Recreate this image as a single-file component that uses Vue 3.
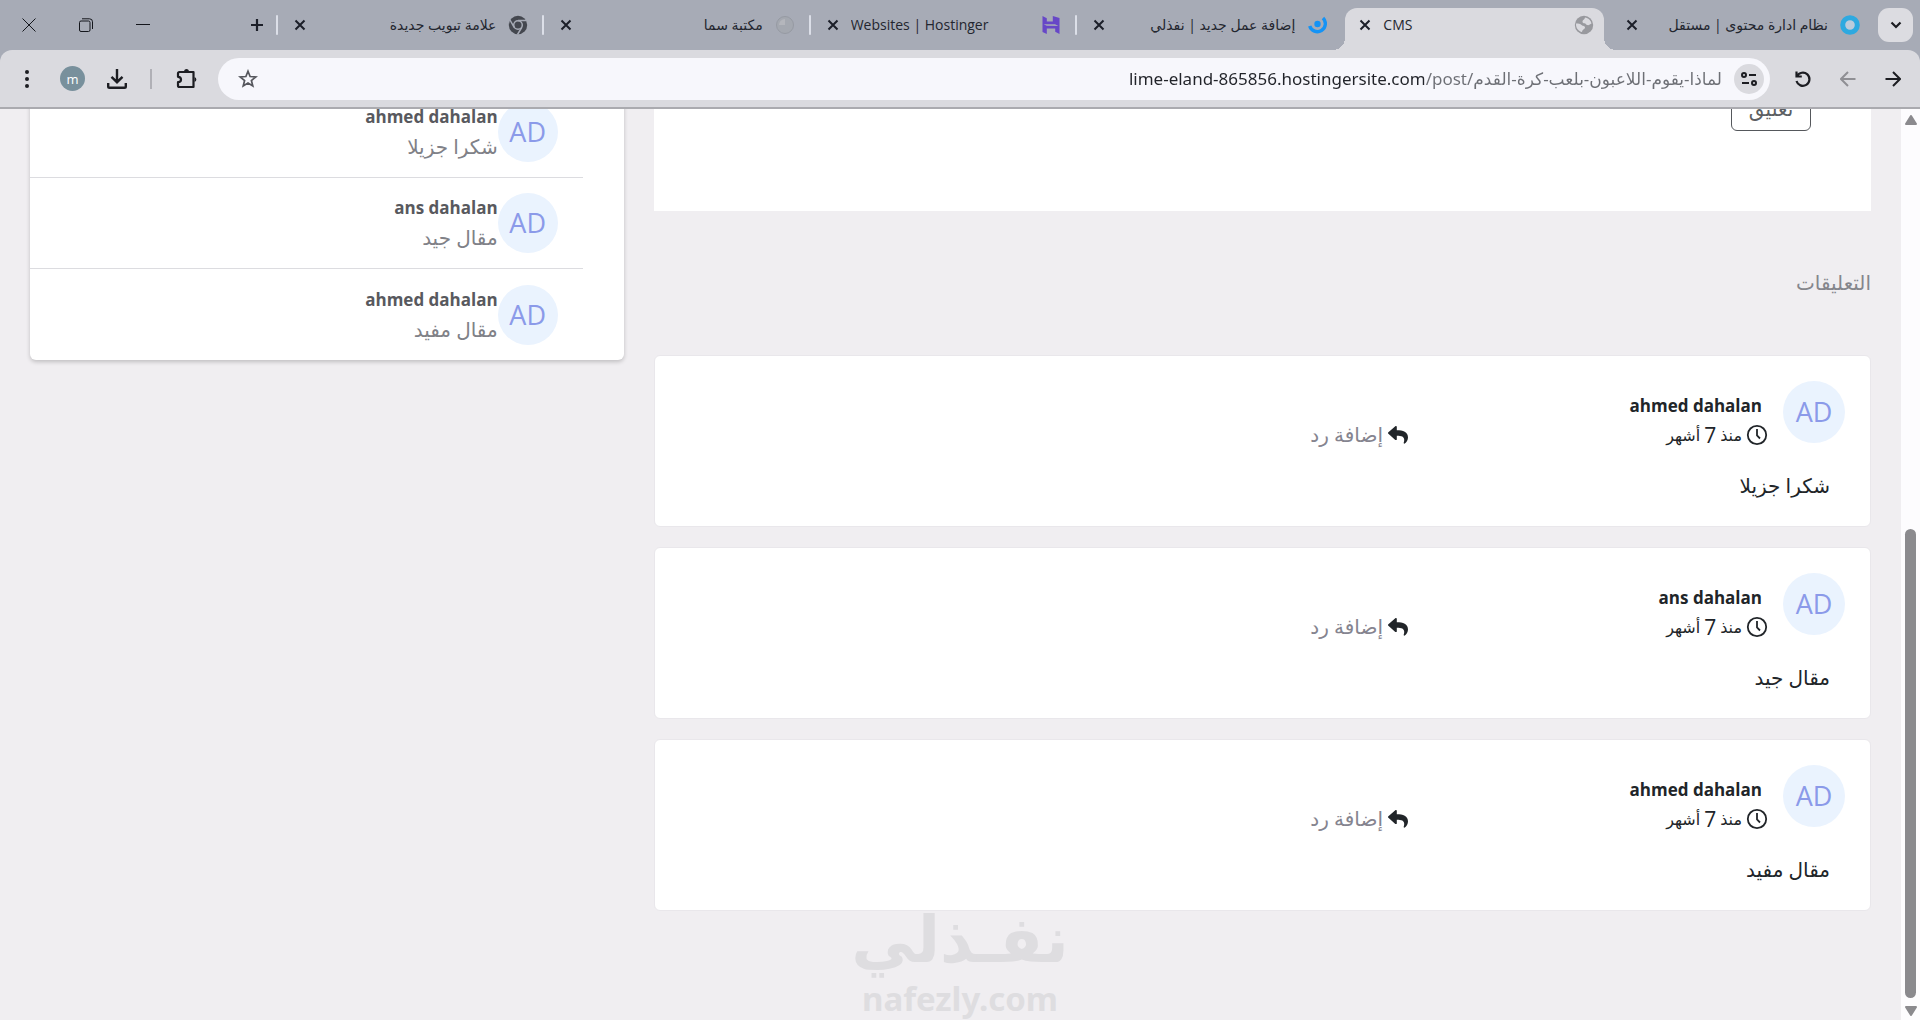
<template>
  <div class="browser" dir="rtl">
    <header class="tab-strip">
      <button class="tab-search" type="button" aria-label="البحث في علامات التبويب">
        <svg width="12" height="8" viewBox="0 0 12 8"><path d="M1.500 1.500 6 6l4.500-4.500" fill="none" stroke="#1c1d22" stroke-width="2.200" /></svg>
      </button>

      <nav class="tabs">
        <div v-for="t in tabs" :key="t.id" class="tab" :class="{ active: t.active, divided: t.divided }">
          <svg v-if="t.icon === 'ring'" class="favicon" viewBox="0 0 20 20">
            <circle cx="10" cy="10" r="7.300" fill="#bccbdb" stroke="#2ea9e0" stroke-width="5" />
          </svg>
          <svg v-else-if="t.icon === 'globe'" class="favicon" viewBox="0 0 20 20">
            <circle cx="10" cy="10" r="9.200" fill="#98999e" />
            <path d="M2 8.500c2.500 0 4.500.2 5.500 1.500 1 1.200 3.500.6 3.500 2.500s-2.500 1.500-3 4.500c-3.300-.7-6.300-3.500-6-8.500zM8.500 6.500C8.800 4.500 10.500 5 11 2.500c3.300.5 6 3 6.500 6-1.500 1-2.500 2-4.500 1.500-1.500-.4-1-1.500-2.500-1.700-1.200-.1-2.200-.5-2-1.800z" fill="#dadadf" />
          </svg>
          <svg v-else-if="t.icon === 'nafezly'" class="favicon" viewBox="0 0 20 20">
            <circle cx="10.500" cy="9" r="3.200" fill="#1593f5" />
            <path d="M16 3a8 8 0 1 1-13.300 8" fill="none" stroke="#1593f5" stroke-width="3.400" />
          </svg>
          <svg v-else-if="t.icon === 'hostinger'" class="favicon" viewBox="0 0 20 20">
            <path d="M1.500 9V1l4.300 2.300v3.200l6 .1V1L18.500 3v8.500L14 9.200zM18.500 11v8l-4.300-2.200v-3.300l-8.400-.1V19L1.500 17V8.800l4.300 2z" fill="#6747c7" />
          </svg>
          <svg v-else-if="t.icon === 'blank'" class="favicon" viewBox="0 0 20 20">
            <circle cx="10" cy="10" r="8.500" fill="#a4a8b0" stroke="#969aa3" />
            <path d="M10 4v6H4a6 6 0 0 1 6-6z" fill="#b4b6bc" />
          </svg>
          <svg v-else class="favicon" viewBox="0 0 20 20">
            <circle cx="10" cy="10" r="9.200" fill="#44474f" />
            <circle cx="10" cy="10" r="4.300" fill="#44474f" stroke="#a7abb6" stroke-width="1.500" />
            <path d="M10 5.500h8.500M6.200 12.300 2 5M13.800 12.300 9.500 19.500" stroke="#a7abb6" stroke-width="1.500" />
          </svg>
          <a href="#" class="tab-title" :class="{ latin: t.latin }" @click.prevent>{{ t.title }}</a>
          <button class="tab-close" type="button" aria-label="إغلاق">
            <svg width="12" height="12" viewBox="0 0 12 12"><path d="m1.500 1.500 9 9m0-9-9 9" stroke="#1c1f29" stroke-width="2" /></svg>
          </button>
        </div>
      </nav>

      <button class="new-tab" type="button" aria-label="علامة تبويب جديدة">
        <svg width="14" height="14" viewBox="0 0 14 14"><path d="M7 1v12M1 7h12" stroke="#1c1f29" stroke-width="2.200" /></svg>
      </button>

      <div class="window-buttons">
        <button type="button" aria-label="تصغير">
          <svg width="14" height="14" viewBox="0 0 14 14"><path d="M0 6.500h14" stroke="#14161c" /></svg>
        </button>
        <button type="button" aria-label="استعادة">
          <svg width="14" height="14" viewBox="0 0 14 14" fill="none" stroke="#14161c">
            <rect x=".5" y="3" width="10.500" height="10.500" rx="1.500" />
            <path d="M3 .8h7.500a3 3 0 0 1 3 3V11" />
          </svg>
        </button>
        <button type="button" aria-label="إغلاق النافذة">
          <svg width="14" height="14" viewBox="0 0 14 14"><path d="m.5.500 13 13m0-13-13 13" stroke="#14161c" /></svg>
        </button>
      </div>
    </header>

    <div class="toolbar">
      <button class="nav-button" type="button" aria-label="التقدم">
        <svg width="16" height="16" viewBox="0 0 16 16" fill="none" stroke="#1c1d22" stroke-width="2"><path d="M.5 8h14M8 1l7 7-7 7" /></svg>
      </button>
      <button class="nav-button" type="button" aria-label="رجوع" disabled>
        <svg width="16" height="16" viewBox="0 0 16 16" fill="none" stroke="#8f8f94" stroke-width="2"><path d="M15.500 8h-14M8 1 1 8l7 7" /></svg>
      </button>
      <button class="nav-button" type="button" aria-label="إعادة تحميل">
        <svg width="18" height="18" viewBox="0 0 18 18" fill="none" stroke="#1c1d22" stroke-width="2.200"><path d="M2.500 1.500v5h5.300M3 6.200A6.600 6.600 0 1 1 2.500 11" /></svg>
      </button>

      <div class="address">
        <button class="site-info" type="button" aria-label="معلومات الموقع">
          <svg width="16" height="14" viewBox="0 0 16 14" fill="none" stroke="#1c1d22" stroke-width="2">
            <circle cx="3" cy="3" r="2" /><path d="M8 3h7M1 11h7" /><circle cx="13" cy="11" r="2" />
          </svg>
        </button>
        <input v-model="url" class="url" type="text" dir="ltr" aria-label="شريط العناوين" spellcheck="false" />
        <button class="star" type="button" aria-label="إضافة إشارة">
          <svg width="20" height="20" viewBox="0 0 20 20"><path d="m10 2.200 2.100 5.300 5.700.4-4.400 3.600 1.400 5.500L10 14l-4.800 3 1.400-5.500-4.400-3.600 5.700-.4z" fill="none" stroke="#56575d" stroke-width="1.700" /></svg>
        </button>
      </div>

      <button class="extensions" type="button" aria-label="الإضافات">
        <svg width="22" height="22" viewBox="0 0 22 22">
          <path d="M3.500 4h14v15h-14a1.500 1.500 0 0 1-1.500-1.500v-3.300c4 0 4-5.400 0-5.400V5.500A1.500 1.500 0 0 1 3.500 4z" fill="none" stroke="#1c1d22" stroke-width="2.200" stroke-linejoin="round" />
          <path d="M8 3a2.600 2.600 0 0 1 5 0zM18.500 9a2.600 2.600 0 0 1 0 5z" fill="#1c1d22" />
        </svg>
      </button>
      <span class="toolbar-rule"></span>
      <button class="download" type="button" aria-label="التنزيلات">
        <svg width="20" height="20" viewBox="0 0 20 20" fill="none" stroke="#1c1d22" stroke-width="2.400"><path d="M10 0v13M4.500 7.800 10 13.200l5.500-5.400M1.200 14v3.500q0 1.300 1.300 1.300h15q1.300 0 1.300-1.300V14" /></svg>
      </button>
      <button class="profile" type="button">m</button>
      <button class="menu" type="button" aria-label="القائمة">
        <svg width="4" height="18" viewBox="0 0 4 18" fill="#1c1d22"><circle cx="2" cy="2" r="2" /><circle cx="2" cy="9" r="2" /><circle cx="2" cy="16" r="2" /></svg>
      </button>
    </div>

    <div class="viewport">
      <div class="scrollbar" aria-hidden="true">
        <svg width="12" height="10" viewBox="0 0 12 10"><path d="M6 1 11 9H1z" fill="#8b8a8e" stroke="#8b8a8e" stroke-linejoin="round" stroke-width="2" /></svg>
        <span class="thumb"></span>
        <svg width="12" height="10" viewBox="0 0 12 10"><path d="M6 9 11 1H1z" fill="#8b8a8e" stroke="#8b8a8e" stroke-linejoin="round" stroke-width="2" /></svg>
      </div>

      <div class="page">
        <main class="content">
          <section class="post">
            <button class="comment-button" type="button">تعليق</button>
          </section>

          <h2 class="heading">التعليقات</h2>

          <article v-for="c in comments" :key="c.id" class="comment">
            <div class="comment-head">
              <div class="author">
                <span class="avatar large">AD</span>
                <div class="author-info">
                  <strong class="name">{{ c.name }}</strong>
                  <span class="time">
                    <svg width="22" height="22" viewBox="0 0 22 22" fill="none" stroke="#212529" stroke-width="1.800">
                      <circle cx="11" cy="11" r="9.200" /><path d="M11 5v6.500l3 3" />
                    </svg>
                    منذ <span class="digit">7</span> أشهر
                  </span>
                </div>
              </div>
              <a href="#" class="reply" @click.prevent>
                <svg width="20" height="18" viewBox="0 0 20 18"><path d="M.4 6.200 7.300.3c.6-.5 1.500-.1 1.500.7v3.200c6.200.1 11.200 1.300 11.200 7.300 0 2.400-1.500 4.800-3.200 6-.5.4-1.300-.1-1.100-.7 1.700-5.500-.8-7-6.900-7v3.400c0 .8-.9 1.200-1.500.7L.4 7.700a1 1 0 0 1 0-1.500z" fill="#212529" /></svg>
                إضافة رد
              </a>
            </div>
            <p class="comment-text">{{ c.text }}</p>
          </article>
        </main>

        <aside class="sidebar">
          <ul class="latest">
            <li v-for="c in comments" :key="c.id" class="latest-item">
              <span class="avatar">AD</span>
              <div>
                <strong class="latest-name">{{ c.name }}</strong>
                <p class="latest-text">{{ c.text }}</p>
              </div>
            </li>
          </ul>
        </aside>
      </div>
    </div>

    <div class="watermark">
      <span class="mark-ar">نفـذلي</span>
      <span class="mark-en" dir="ltr">nafezly.com</span>
    </div>
  </div>
</template>

<script setup>
import { ref } from 'vue'

const url = ref('lime-eland-865856.hostingersite.com/post/لماذا-يقوم-اللاعبون-بلعب-كرة-القدم')

const tabs = [
  { id: 1, title: 'نظام ادارة محتوى | مستقل', icon: 'ring' },
  { id: 2, title: 'CMS', icon: 'globe', active: true, latin: true },
  { id: 3, title: 'إضافة عمل جديد | نفذلي', icon: 'nafezly', divided: true },
  { id: 4, title: 'Websites | Hostinger', icon: 'hostinger', latin: true, divided: true },
  { id: 5, title: 'مكتبة سما', icon: 'blank', divided: true },
  { id: 6, title: 'علامة تبويب جديدة', icon: 'chrome', divided: true }
]

const comments = [
  { id: 1, name: 'ahmed dahalan', text: 'شكرا جزيلا' },
  { id: 2, name: 'ans dahalan', text: 'مقال جيد' },
  { id: 3, name: 'ahmed dahalan', text: 'مقال مفيد' }
]
</script>

<style>
body {
  margin: 0;
  overflow: hidden;
}
</style>

<style scoped>
* {
  box-sizing: border-box;
}
.browser {
  position: relative;
  height: 100vh;
  display: flex;
  flex-direction: column;
  background: #a7abb6;
  font-family: "Open Sans", "Noto Sans", "DejaVu Sans", sans-serif;
  color: #212529;
}
button {
  padding: 0;
  border: 0;
  background: none;
  font: inherit;
  color: inherit;
  display: flex;
  align-items: center;
  justify-content: center;
  flex: none;
}
svg {
  display: block;
  flex: none;
}

/* tabs */
.tab-strip {
  display: flex;
  align-items: center;
  height: 50px;
  flex: none;
  padding-right: 7px;
}
.tab-search {
  width: 35px;
  height: 34px;
  border-radius: 11px;
  background: #dcdce1;
  margin-left: 4px;
}
.tabs {
  display: flex;
  flex: 0 1 1598px;
  min-width: 0;
  align-self: stretch;
}
.tab {
  position: relative;
  flex: 1 1 0;
  min-width: 0;
  display: flex;
  align-items: center;
  gap: 12px;
  padding: 0 14px 0 18px;
}
.tab.divided::after {
  content: "";
  position: absolute;
  left: 0;
  top: 15px;
  width: 2px;
  height: 20px;
  border-radius: 2px;
  background: #dcdfe8;
}
.tab.active::before {
  content: "";
  position: absolute;
  inset: 8px 4px 0;
  border-radius: 12px 12px 0 0;
  background: #dadadf;
}
/* outward curves where the active tab meets the toolbar */
.tab.active::after {
  content: "";
  position: absolute;
  left: -8px;
  right: -8px;
  bottom: 0;
  height: 12px;
  background:
    radial-gradient(circle at 0 0, transparent 12px, #dadadf 12px) left / 12px 12px no-repeat,
    radial-gradient(circle at 100% 0, transparent 12px, #dadadf 12px) right / 12px 12px no-repeat;
}
.favicon {
  width: 20px;
  height: 20px;
  position: relative;
}
.tab-title {
  position: relative;
  flex: 1;
  min-width: 0;
  overflow: hidden;
  white-space: nowrap;
  font-size: 14px;
  line-height: 24px;
  color: #23262f;
  text-decoration: none;
}
.tab-title.latin {
  direction: ltr;
  text-align: left;
}
.tab-close {
  position: relative;
  width: 12px;
  height: 20px;
}
.new-tab {
  width: 38px;
}
.window-buttons {
  display: flex;
  margin-right: auto;
}
.window-buttons button {
  width: 57px;
  height: 48px;
}

/* toolbar */
.toolbar {
  display: flex;
  align-items: center;
  height: 59px;
  flex: none;
  padding: 0 5px 0 25px;
  background: #dadadf;
  border-bottom: 2px solid #aaaaaf;
  border-radius: 12px 12px 0 0;
}
.nav-button {
  width: 45px;
  height: 40px;
}
.address {
  flex: 1;
  min-width: 0;
  display: flex;
  align-items: center;
  height: 42px;
  margin: 0 10px 0 20px;
  padding: 0 6px 0 20px;
  border-radius: 21px;
  background: #f7f7fc;
}
.site-info {
  width: 30px;
  height: 30px;
  border-radius: 50%;
  background: #dadadf;
}
/* domain dark, path grey */
.url {
  flex: 1;
  min-width: 0;
  border: 0;
  outline: 0;
  padding: 0;
  margin: 0 12px;
  font-family: "Noto Sans", "DejaVu Sans", sans-serif;
  font-size: 17px;
  line-height: 30px;
  text-align: right;
  color: transparent;
  background: linear-gradient(to left, #6d6f75 298px, #212329 298px);
  -webkit-background-clip: text;
  background-clip: text;
}
.extensions {
  width: 22px;
}
.toolbar-rule {
  width: 2px;
  height: 20px;
  margin: 0 24px 0 23px;
  background: #b0b0b6;
}
.profile {
  width: 25px;
  height: 25px;
  margin: 0 22px 0 31px;
  border-radius: 50%;
  background: #78909c;
  color: #fff;
  font-size: 13px;
  line-height: 24px;
}

/* page */
.viewport {
  flex: 1;
  min-height: 0;
  display: flex;
  overflow: hidden;
  background: #f0eef1;
}
.scrollbar {
  width: 19px;
  flex: none;
  display: flex;
  flex-direction: column;
  align-items: center;
  padding: 6px 0 4px;
  background: #fdfcfe;
}
.thumb {
  width: 11px;
  height: 52%;
  margin: auto 0 8px;
  border-radius: 6px;
  background: #8b8a8e;
}
.page {
  flex: 1;
  min-width: 0;
  display: flex;
  align-items: flex-start;
  padding: 0 15px;
}
.content {
  width: 66.667%;
  padding: 0 15px;
}
.sidebar {
  width: 33.333%;
  padding: 0 15px;
}
.post {
  margin-top: -24px;
  padding: 0 60px 80px;
  background: #fff;
}
.comment-button {
  width: 80px;
  height: 46px;
  border: 1px solid #55585c;
  border-radius: 6px;
  background: #fff;
  font-size: 20px;
  color: #5c5f63;
}
.heading {
  margin: 56px 0;
  font-size: 20px;
  font-weight: 400;
  line-height: 32px;
  color: #85868c;
}
.comment {
  margin-bottom: 20px;
  padding: 25px 25px 24px;
  border: 1px solid #e9e7eb;
  border-radius: 6px;
  background: #fff;
}
.comment-head {
  display: flex;
}
.author {
  width: 37.5%;
  display: flex;
}
.avatar {
  width: 60px;
  height: 60px;
  flex: none;
  border-radius: 50%;
  background: #eaf3fe;
  color: #8b9ae9;
  font-size: 27px;
  line-height: 60px;
  text-align: center;
}
.avatar.large {
  width: 62px;
  height: 62px;
  line-height: 62px;
}
.author-info {
  padding: 11px 15px 0 0;
}
.name {
  display: block;
  margin-right: 6px;
  font-size: 17px;
  font-weight: 700;
  line-height: 28px;
}
.time {
  display: flex;
  align-items: center;
  gap: 4px;
  font-size: 16px;
  line-height: 30px;
}
.digit {
  font-size: 21px;
}
.reply {
  display: flex;
  align-items: center;
  align-self: flex-start;
  gap: 5px;
  margin-top: 39px;
  font-size: 20px;
  line-height: 30px;
  color: #85848f;
  text-decoration: none;
}
.comment-text {
  margin: 20px 15px 0;
  font-size: 20px;
  line-height: 32px;
}

.latest {
  list-style: none;
  margin: -22px 0 0;
  padding: 0 41px 0 0;
  border-radius: 6px;
  background: #fff;
  box-shadow: 0 2px 4px rgba(0, 0, 0, 0.2);
}
.latest-item {
  display: flex;
  align-items: center;
  height: 91px;
  padding-right: 25px;
  border-bottom: 1px solid #dcdce0;
}
.latest-item:last-child {
  border-bottom: 0;
}
.latest-name {
  display: block;
  font-size: 17px;
  font-weight: 700;
  line-height: 30px;
  color: #58595e;
}
.latest-text {
  margin: 0;
  font-size: 20px;
  line-height: 30px;
  color: #808187;
}

.watermark {
  position: absolute;
  left: 0;
  right: 0;
  bottom: 0;
  display: flex;
  flex-direction: column;
  align-items: center;
  color: #dedde0;
  font-family: "Noto Sans", "DejaVu Sans", sans-serif;
  font-weight: 700;
  pointer-events: none;
}
.mark-ar {
  font-size: 64px;
  line-height: 80px;
}
.mark-en {
  font-size: 33px;
  line-height: 42px;
}
</style>
